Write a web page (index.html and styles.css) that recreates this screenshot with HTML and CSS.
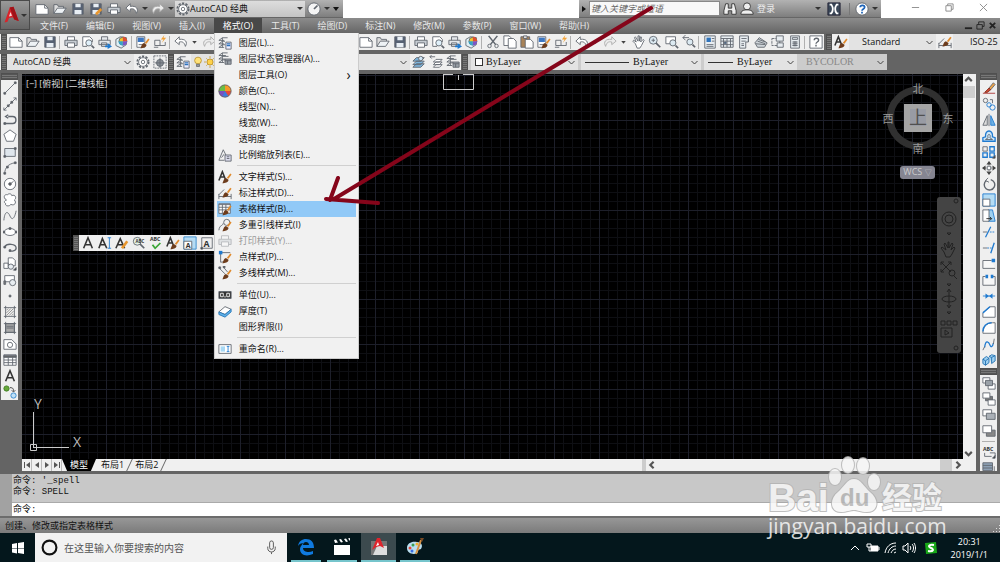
FILE: index.html
```html
<!DOCTYPE html>
<html lang="zh-CN">
<head>
  <meta charset="utf-8">
  <title>AutoCAD 经典</title>
  <link rel="stylesheet" href="styles.css">
  <script src="toolbars.js" defer></script>
</head>
<body>
  <!-- icon sprite -->
  <svg class="sprite">
    <symbol id="brush" viewBox="0 0 16 16"><path d="M10 9l4-5 1.500 1-3.500 5z" fill="#e08a2c" stroke="none"/><path d="M5 15c1-1 1-5 4-6l3 2c0 3-4 4-7 4z" fill="#6d3c1c" stroke="none"/></symbol>
    <symbol id="new" viewBox="0 0 16 16"><path d="M1 3h10l4 4v7H1z" fill="#fff"/><path d="M11 3v4h4"/></symbol>
    <symbol id="open" viewBox="0 0 16 16"><path d="M1 13V3h4l1 2h6v2" fill="#ddd"/><path d="M1 13l4-6h10l-4 6z" fill="#eef2f5"/></symbol>
    <symbol id="save" viewBox="0 0 16 16"><path d="M2 2h12v12H2z" fill="#566173"/><path d="M5 2h6v4H5zM4 9h8v5H4z" fill="#e8eef4" stroke="none"/></symbol>
    <symbol id="saveas" viewBox="0 0 16 16"><path d="M2 2h12v12H2z" fill="#566173"/><path d="M5 2h6v4H5zM4 9h8v5H4z" fill="#e8eef4" stroke="none"/><path d="M8 14l6-6" stroke="#e8962e" stroke-width="3"/></symbol>
    <symbol id="print" viewBox="0 0 16 16"><path d="M4 6V2h8v4" fill="#fff"/><path d="M1 6h14v6H1z" fill="#c6ccd2"/><path d="M4 9h8v5H4z" fill="#fff"/></symbol>
    <symbol id="preview" viewBox="0 0 16 16"><path d="M2 13V2h8l3 3v3M2 13h5" fill="#fff"/><circle cx="9" cy="9" r="3.500" fill="#dff0fa"/><path d="M12 12l3 3" stroke-width="2"/></symbol>
    <symbol id="publish" viewBox="0 0 16 16"><path d="M4 6V2h7v4M1 6h13v5H1zM4 9h6v4H4z" fill="#e4e7ea"/><path d="M8 13h4" stroke="#1f7ad0" stroke-width="2"/><path d="M11 9l5 4-5 3z" fill="#1f7ad0" stroke="none"/></symbol>
    <symbol id="cube" viewBox="0 0 16 16"><path d="M1 5l5-3 7 1v8l-6 4-6-3z" fill="#dff0f6"/><circle cx="9" cy="7" r="4.500" fill="#f0c52e"/><path d="M9 7V2a5 5 0 0 1 5 5z" fill="#e05030" stroke="none"/><path d="M9 7h5a5 5 0 0 1-5 5z" fill="#7a55c8" stroke="none"/><path d="M9 7v5a5 5 0 0 1-5-5z" fill="#38a3c8" stroke="none"/></symbol>
    <symbol id="match" viewBox="0 0 16 16"><path d="M1 2h9v12H1z" fill="#fff"/><path d="M2 3h7v5H2z" fill="#3d77c2" stroke="none"/><path d="M3 11h4"/><use href="#brush"/></symbol>
    <symbol id="block" viewBox="0 0 16 16"><path d="M2 6h6v6H2zM1 14h5M8 12h6v-4"/><path d="M13 0L9 5h3l-2 4 5-6h-3z" fill="#f2a33a" stroke="none"/></symbol>
    <symbol id="undo" viewBox="0 0 16 16"><path d="M6 2L1 7l5 4V8c4-1 6 1 7 5 3-5 0-9-7-8z" fill="#fff"/></symbol>
    <symbol id="redo" viewBox="0 0 16 16"><path d="M10 2l5 5-5 4V8c-4-1-6 1-7 5-3-5 0-9 7-8z" fill="#ececec" stroke="#aaa"/></symbol>
    <symbol id="drop" viewBox="0 0 16 16"><path d="M4 6h8l-4 5z" fill="#444" stroke="none"/></symbol>
    <symbol id="cut" viewBox="0 0 16 16"><path d="M3 1l8 10M13 1L5 11" stroke-width="1.800"/><circle cx="4" cy="12.500" r="2"/><circle cx="12" cy="12.500" r="2"/></symbol>
    <symbol id="copy" viewBox="0 0 16 16"><path d="M1 1h6l2 2v9H1z" fill="#fff"/><path d="M6 4h6l3 3v8H6z" fill="#fff"/></symbol>
    <symbol id="paste" viewBox="0 0 16 16"><path d="M1 2h10v12H1z" fill="#a98358"/><path d="M4 1h4v3H4z" fill="#ddd"/><path d="M6 5h6l3 3v7H6z" fill="#fff"/></symbol>
    <symbol id="hand" viewBox="0 0 16 16"><path d="M5 10L2 7l1-1 3 2L4 3l1-1 3 5V1h1.500v6L11 2l1 .5L11 8l3-3 1 1-3 6-2 3H7z" fill="#fff"/></symbol>
    <symbol id="zoom" viewBox="0 0 16 16"><circle cx="6" cy="6" r="4.500" fill="#dceaf2"/><path d="M9 9l5 5" stroke-width="2"/><path d="M4 6h4M6 4v4"/></symbol>
    <symbol id="zoomwin" viewBox="0 0 16 16"><path d="M1 2h11v8H1z" fill="#fff"/><circle cx="9" cy="9" r="3.500" fill="#dceaf2"/><path d="M12 12l3 3" stroke-width="2"/></symbol>
    <symbol id="zoomprev" viewBox="0 0 16 16"><path d="M8 3H1l3-3M1 3l3 3"/><circle cx="9" cy="8" r="3.500" fill="#dceaf2"/><path d="M12 11l3 3" stroke-width="2"/></symbol>
    <symbol id="props" viewBox="0 0 16 16"><path d="M2 1h12v14H2z" fill="#e8edf1"/><path d="M4 3h5v5H4z" fill="#2f73bb" stroke="none"/><path d="M10 4h3M10 7h3M4 11h8M4 13h8"/></symbol>
    <symbol id="center" viewBox="0 0 16 16"><path d="M1 1h14v13H1z" fill="#e8edf1"/><path d="M1 4h14M4 4v10M8 4v10M12 4v10M1 7h14M1 11h14"/><path d="M5 8h2v2H5z" fill="#2f73bb"/></symbol>
    <symbol id="palette" viewBox="0 0 16 16"><path d="M3 1h10v7h-3v7H3z" fill="#e8edf1"/><path d="M5 4h6M5 7h5M5 10h3M5 12h3M13 2v6"/></symbol>
    <symbol id="sheet" viewBox="0 0 16 16"><path d="M1 9l5-6 9 6-3 5H4z" fill="#cfd5da"/><path d="M2 10l11 1M4 7l9 3M5 5l8 3"/></symbol>
    <symbol id="markup" viewBox="0 0 16 16"><path d="M1 4h9v8H1z" stroke-dasharray="3 1"/><path d="M6 1h8v6H6zM7 9h7v5H7z" fill="#e8edf1"/></symbol>
    <symbol id="calc" viewBox="0 0 16 16"><path d="M3 1h10v14H3z" fill="#e8edf1"/><path d="M5 3h6v2H5zM5 8h6M5 10h6M5 12h6M7 7v6M9 7v6"/></symbol>
    <symbol id="help" viewBox="0 0 16 16"><path d="M1 1h14v14H1z" fill="#fff"/><path d="M6 6c0-3 5-3 5 0 0 2-3 2-3 4M8 11v2" stroke-width="1.600"/></symbol>
    <symbol id="textstyle" viewBox="0 0 16 16"><path d="M1 12L5 2l4 10M3 8h5" stroke="#333" stroke-width="1.800"/><use href="#brush"/></symbol>
    <symbol id="dimstyle" viewBox="0 0 16 16"><path d="M1 9v6M15 9v6M1 12h14M1 10l6-6"/><use href="#brush" y="-2"/></symbol>
    <symbol id="gear" viewBox="0 0 16 16"><circle cx="8" cy="8" r="6.500" stroke-dasharray="2.500 1.600" stroke-width="2"/><circle cx="8" cy="8" r="5" fill="#fff"/><circle cx="8" cy="8" r="2"/></symbol>
    <symbol id="gearsel" viewBox="0 0 16 16"><path d="M1 1h14v14H1z" stroke-dasharray="2 1"/><circle cx="8" cy="9" r="4" fill="#8a9097"/><path d="M8 3v12M2 9h12"/></symbol>
    <symbol id="layers" viewBox="0 0 16 16"><path d="M1 5l4-3h6M1 9l4-3h3M1 13l4-3h3M1 5h6M1 9h6M1 13h6M5 2v11"/><path d="M9 7h6v8H9z" fill="#eef"/><path d="M10 9h4M10 11h4" stroke="#2f73bb" stroke-width="1.600"/></symbol>
    <symbol id="layerstate" viewBox="0 0 16 16"><path d="M1 4l4-3h6M1 8l4-3h7M1 12l4-3h3M1 4h8M1 8h7M1 12h6M5 1v11"/><path d="M8 8h7v6H8z" fill="#9aa1a8"/><path d="M8 10h7M11 10v4"/></symbol>
    <symbol id="layermake" viewBox="0 0 16 16"><path d="M1 14l4-4h9l-4 4zM1 11l4-4h9l-4 4zM1 7l4-4h9l-4 4z" fill="#7db4dc"/><circle cx="10" cy="4" r="2.500" fill="#cfe6f6"/></symbol>
    <symbol id="layerprev" viewBox="0 0 16 16"><path d="M5 14l3-3h7l-3 3zM5 11l3-3h7l-3 3zM5 8l3-3h7l-3 3z" fill="#fff"/><path d="M7 2H1l2-2M1 2l2 2"/></symbol>
    <symbol id="bulb" viewBox="0 0 16 16"><circle cx="8" cy="6" r="4.500" fill="#ffe27a" stroke="#b48a20"/><path d="M6 11h4v3H6z" fill="#999"/></symbol>
    <symbol id="sun" viewBox="0 0 16 16"><circle cx="8" cy="8" r="4" fill="#ffd24a" stroke="#b48a20"/><path d="M8 0v3M8 13v3M0 8h3M13 8h3M3 3l2 2M11 11l2 2M13 3l-2 2M3 13l2-2" stroke="#c89a20"/></symbol>
    <!-- draw -->
    <symbol id="line" viewBox="0 0 16 16"><path d="M2 14L14 2"/><path d="M1 13h2v2H1zM13 1h2v2h-2z" fill="#555"/></symbol>
    <symbol id="xline" viewBox="0 0 16 16"><path d="M1 15L15 1M1 12v3h3M12 1h3v3"/><path d="M5 9h2v2H5zM9 5h2v2H9z" fill="#555"/></symbol>
    <symbol id="pline" viewBox="0 0 16 16"><path d="M6 4h5c5 0 5 8 0 8H2M6 2L3 4l3 2" stroke-width="1.600"/><path d="M1 11h2v2H1z" fill="#555"/></symbol>
    <symbol id="polygon" viewBox="0 0 16 16"><path d="M8 1l7 5-3 8H4L1 6z" fill="#fff"/></symbol>
    <symbol id="rect" viewBox="0 0 16 16"><path d="M2 4h12v9H2z" fill="#dfe6ec"/><path d="M1 12h2v2H1zM13 3h2v2h-2z" fill="#555"/></symbol>
    <symbol id="arc" viewBox="0 0 16 16"><path d="M2 14C2 8 6 3 14 2"/><path d="M1 13h2v2H1zM4 6h2v2H4zM13 1h2v2h-2z" fill="#555"/></symbol>
    <symbol id="circle" viewBox="0 0 16 16"><circle cx="8" cy="8" r="6.500" fill="#fff"/><path d="M8 8l4-3"/><circle cx="8" cy="8" r="1.500" fill="#555"/></symbol>
    <symbol id="cloud" viewBox="0 0 16 16"><path d="M4 8C0 6 1 1 5 2c2-2 5-1 5 1 4-2 6 3 3 5 3 3 0 7-4 5-2 3-7 2-6-1-2-1-2-3 1-4z" fill="#fff"/></symbol>
    <symbol id="spline" viewBox="0 0 16 16"><path d="M1 13C2 1 6 3 8 8s5 4 7-6"/></symbol>
    <symbol id="ellipse" viewBox="0 0 16 16"><ellipse cx="8" cy="8" rx="6.500" ry="4" fill="#fff"/><path d="M0 7h2v2H0zM14 7h2v2h-2zM7 3h2v2H7z" fill="#555"/></symbol>
    <symbol id="ellarc" viewBox="0 0 16 16"><path d="M2 7c2-5 13-4 13 1 0 4-6 4-7 3" stroke-width="1.500"/><path d="M1 6h2v2H1zM7 10h2v2H7z" fill="#555"/></symbol>
    <symbol id="insert" viewBox="0 0 16 16"><path d="M6 1h5l3 3v6H6zM1 7h5v6H1z" fill="#fff"/><circle cx="9" cy="11" r="3" fill="#e8edf1"/><path d="M12 15h3v-3z" fill="#222"/></symbol>
    <symbol id="mkblock" viewBox="0 0 16 16"><path d="M2 3h11v7H2z" fill="#fff"/><circle cx="11" cy="11" r="3.500" fill="#e8edf1"/><path d="M1 9h2v4H1z" fill="#777"/></symbol>
    <symbol id="point" viewBox="0 0 16 16"><path d="M7 7h2v2H7z" fill="#555"/></symbol>
    <symbol id="hatch" viewBox="0 0 16 16"><path d="M1 3h14M1 13h14M3 1v14M13 1v14"/><path d="M4 6l2-2M4 9l5-5M4 12l8-8M7 12l5-5M10 12l2-2" stroke="#888"/></symbol>
    <symbol id="gradient" viewBox="0 0 16 16"><path d="M3 3h10v10H3z" fill="#aaa"/><path d="M1 3h14M1 13h14M3 1v14M13 1v14M4 6h8M4 8h8"/></symbol>
    <symbol id="region" viewBox="0 0 16 16"><path d="M1 3h9l5 5v6H1z" fill="#fff"/><circle cx="8" cy="9" r="3"/></symbol>
    <symbol id="table" viewBox="0 0 16 16"><path d="M1 2h14v12H1z" fill="#fff"/><path d="M1 3h14v2H1z" fill="#666"/><path d="M1 8h14M1 11h14M6 5v9M11 5v9"/></symbol>
    <symbol id="mtext" viewBox="0 0 16 16"><path d="M3 14L8 2l5 12M5 10h6" stroke="#333" stroke-width="1.800"/></symbol>
    <symbol id="addsel" viewBox="0 0 16 16"><circle cx="4" cy="4" r="3" fill="#66a83a" stroke="#3e7a20"/><circle cx="12" cy="12" r="3" fill="#bfe0f8" stroke="#2f86cc"/><path d="M8 3c4 0 4 2 4 4M10 6l2 2 2-2" stroke="#333"/></symbol>
    <!-- modify -->
    <symbol id="erase" viewBox="0 0 16 16"><path d="M1 14h14" stroke="#a33"/><path d="M8 8l5-6 2 2-5 6z" fill="#eaa24a"/><path d="M3 13l5-5 2 2-4 3z" fill="#c84a34" stroke="#8a3020"/></symbol>
    <symbol id="dup" viewBox="0 0 16 16"><circle cx="4" cy="4" r="2.500"/><circle cx="8" cy="9" r="2.500" stroke="#1f7ad0"/><circle cx="12" cy="12" r="3" stroke="#1f7ad0"/><path d="M9 3h3v4"/></symbol>
    <symbol id="mirror" viewBox="0 0 16 16"><path d="M6 3v11H1z" fill="#ddd"/><path d="M10 3v11h5z" fill="#6fb2e4" stroke="#1f7ad0"/><path d="M8 1v14"/></symbol>
    <symbol id="offset" viewBox="0 0 16 16"><path d="M1 14v-4l3-1c-1-9 9-9 8 0l3 1v4z" fill="#cde6f8" stroke="#1f7ad0" stroke-width="1.500"/><path d="M4 12l3-2c-2-5 4-5 2 0l3 2z"/></symbol>
    <symbol id="array" viewBox="0 0 16 16"><path d="M1 2h5v5H1z"/><path d="M1 9h5v5H1zM9 2h5v5H9zM9 9h5v5H9z" stroke="#1f7ad0" stroke-width="1.500"/><path d="M12 15h3v-3z" fill="#222"/></symbol>
    <symbol id="move" viewBox="0 0 16 16"><path d="M8 1v14M1 8h14" stroke="#444" stroke-dasharray="4 2"/><path d="M8 0L5 4h6zM8 16l-3-4h6zM0 8l4-3v6zM16 8l-4-3v6z" fill="#444" stroke="none"/><path d="M6 6h4v4H6z" fill="#fff"/></symbol>
    <symbol id="rotate" viewBox="0 0 16 16"><path d="M5 4a6 6 0 1 0 5-1" stroke-width="1.600"/><path d="M7 1L4 4l4 2" /></symbol>
    <symbol id="scale" viewBox="0 0 16 16"><path d="M1 1h14v14H1z" fill="#b5dcf4" stroke="#1f7ad0"/><path d="M1 7h8v8H1z" fill="#fff"/></symbol>
    <symbol id="stretch" viewBox="0 0 16 16"><path d="M7 1h5l3 13H7z" fill="#9fd0f0" stroke="#1f7ad0"/><path d="M1 1h7v13H1z" fill="#fff"/><path d="M5 11h6M9 9l2 2-2 2" stroke="#222"/></symbol>
    <symbol id="trim" viewBox="0 0 16 16"><path d="M4 14L10 2" stroke="#1f7ad0" stroke-width="1.500"/><path d="M1 8h5"/><path d="M9 8h6" stroke="#1f7ad0" stroke-dasharray="2 1"/></symbol>
    <symbol id="extend" viewBox="0 0 16 16"><path d="M10 14L14 2" stroke="#1f7ad0" stroke-width="1.500"/><path d="M1 8h5"/><path d="M6 8h5" stroke="#1f7ad0" stroke-dasharray="2 1"/></symbol>
    <symbol id="breakpt" viewBox="0 0 16 16"><path d="M11 4H1v9h14" fill="#f7f7f7"/><path d="M11 2h4v4h-4z" fill="#1f7ad0" stroke="none"/></symbol>
    <symbol id="break" viewBox="0 0 16 16"><path d="M4 4H1v10h14V4h-3" fill="#f7f7f7"/><path d="M4 2h3v4H4zM10 2h3v4h-3z" fill="#1f7ad0" stroke="none"/></symbol>
    <symbol id="join" viewBox="0 0 16 16"><path d="M1 8h14" stroke="#1f7ad0"/><path d="M4 5l4 3-4 3zM12 5L8 8l4 3z" fill="#1f7ad0" stroke="none"/></symbol>
    <symbol id="chamfer" viewBox="0 0 16 16"><path d="M1 14V9l8-7h6v12z" fill="#fff"/><path d="M1 9l8-7" stroke="#1f7ad0" stroke-width="1.600"/></symbol>
    <symbol id="fillet" viewBox="0 0 16 16"><path d="M1 14C1 7 5 2 12 2h3v12z" fill="#fff"/><path d="M1 12C1 6 5 2 11 2" stroke="#1f7ad0" stroke-width="1.600"/></symbol>
    <symbol id="blend" viewBox="0 0 16 16"><path d="M3 12C4 2 8 6 9 9s3 3 4-2" stroke="#1f7ad0" stroke-width="1.500"/><path d="M1 15l2-4M13 8l1-6"/></symbol>
    <symbol id="explode" viewBox="0 0 16 16"><path d="M1 7l4-3 3 2v5l-4 3-3-2zM8 4l3-2 4 1v6l-4 3" fill="#9fd0f0" stroke="#1f6fb0"/><path d="M1 7l3 2v5M4 9l4-3M11 5v7M11 5l4-2M8 4l3 1" stroke="#1f6fb0"/></symbol>
    <symbol id="front" viewBox="0 0 16 16"><path d="M1 2h8v6H1zM7 9h8v6H7z" fill="#fff"/><path d="M4 5h8v6H4z" fill="#9aa1a8"/></symbol>
    <symbol id="back" viewBox="0 0 16 16"><path d="M4 5h8v5H4z" fill="#777"/><path d="M1 1h8v6H1zM7 9h8v6H7z" fill="#fff"/></symbol>
    <symbol id="above" viewBox="0 0 16 16"><path d="M1 2h10v7H1z" fill="#fff"/><path d="M5 6h10v7H5z" fill="#aab0b7"/></symbol>
    <symbol id="under" viewBox="0 0 16 16"><path d="M5 7h10v7H5z" fill="#888"/><path d="M1 2h10v8H1z" fill="#fff"/></symbol>
    <symbol id="abc" viewBox="0 0 16 16"><text x="1" y="7" font-size="6">ABC</text><path d="M3 9v4h8M9 9h6v4"/><path d="M12 15h3v-3z" fill="#222"/></symbol>
    <symbol id="hatchback" viewBox="0 0 16 16"><path d="M1 2h11v9H1z" fill="#8da0b4"/><path d="M1 5h11M1 8h11M14 6v8H6"/></symbol>
    <!-- text toolbar -->
    <symbol id="dtext" viewBox="0 0 16 16"><path d="M1 14L5 3l5 11M3 10h5" stroke="#333" stroke-width="1.800"/><path d="M11 2h4M13 2v12M11 14h4" stroke="#1f7ad0"/></symbol>
    <symbol id="edittext" viewBox="0 0 16 16"><path d="M1 14L6 3l5 11M3 10h6" stroke="#333" stroke-width="1.800"/><path d="M8 14l6-8" stroke="#e8962e" stroke-width="3"/></symbol>
    <symbol id="find" viewBox="0 0 16 16"><circle cx="6" cy="6" r="4.500" fill="#e6f2e8"/><path d="M9 9l5 5" stroke-width="2"/><text x="4" y="8" font-size="5">ABC</text></symbol>
    <symbol id="spell" viewBox="0 0 16 16"><text x="1" y="6" font-size="6">ABC</text><path d="M4 10l3 4 6-6" stroke="#3aa535" stroke-width="2"/></symbol>
    <symbol id="scaletext" viewBox="0 0 16 16"><path d="M1 1h14v14H1z" fill="#b5dcf4" stroke="#2f86cc"/><path d="M1 6h9v9H1z" fill="#fff"/><text x="3" y="14" font-size="8">A</text></symbol>
    <symbol id="justify" viewBox="0 0 16 16"><path d="M2 2h12v12H2z"/><text x="4" y="12" font-size="10">A</text><path d="M1 13h2v2H1z" fill="#333"/></symbol>
    <!-- menu -->
    <symbol id="color" viewBox="0 0 16 16"><g stroke="none"><circle cx="8" cy="8" r="7" fill="#e8483a"/><path d="M8 8V1a7 7 0 0 1 7 7z" fill="#f59a28"/><path d="M8 8L1 9a7 7 0 0 1 7-8z" fill="#6bbd45"/><path d="M8 8L1 8a7 7 0 0 0 5 7z" fill="#7a4fc0"/><path d="M8 8l-3 6a7 7 0 0 0 7 0z" fill="#3c7ae0"/></g><circle cx="8" cy="8" r="7" stroke="#666"/></symbol>
    <symbol id="scalelist" viewBox="0 0 16 16"><path d="M1 14L6 2l3 6M1 14h6M4 11l3-4"/><path d="M8 8h7v7H8z" fill="#dde"/><path d="M10 10h3M10 12h3"/></symbol>
    <symbol id="tablestyle" viewBox="0 0 16 16"><path d="M1 2h13v11H1z" fill="#fff"/><path d="M1 3h13M1 6h13M1 9h13M5 3v10M9 3v10"/><use href="#brush"/></symbol>
    <symbol id="leader" viewBox="0 0 16 16"><path d="M1 14C2 7 5 10 6 6"/><circle cx="10" cy="5" r="3.500"/><use href="#brush"/></symbol>
    <symbol id="pointstyle" viewBox="0 0 16 16"><path d="M3 3h11M3 3v11l6-1"/><path d="M1 1h4v4H1z" fill="#1f7ad0" stroke="none"/><use href="#brush"/></symbol>
    <symbol id="mlstyle" viewBox="0 0 16 16"><path d="M1 2l7 7M6 1l5 6"/><path d="M1 1h2v2H1zM6 0h2v2H6z" fill="#555"/><use href="#brush"/></symbol>
    <symbol id="units" viewBox="0 0 16 16"><path d="M1 4h14v8H1z" fill="#333"/><path d="M3 6h3v4H3zM10 6h3v4h-3zM8 9v2" stroke="#fff"/></symbol>
    <symbol id="thick" viewBox="0 0 16 16"><path d="M1 9l7-6 7 3-7 6z" fill="#fff"/><path d="M1 9v3l7 3 7-6V6l-7 6z" fill="#5fb0e8" stroke="#2878b8"/></symbol>
    <symbol id="rename" viewBox="0 0 16 16"><path d="M1 3h14v10H1z" fill="#fff"/><path d="M3 5h5v6H3z" fill="#a8d8f4" stroke="none"/><path d="M10 5h3M11.500 5v6M10 11h3" stroke="#1f7ad0"/></symbol>
  </svg>

  <header class="titlebar">
    <div class="quick">
      <span class="icons" data-icons="new open save saveas print undo"></span>
      <i class="arrow"></i>
      <span class="icons" data-icons="redo"></span>
      <i class="arrow"></i>
      <label class="combo workspace"><svg class="ic"><use href="#gear"/></svg><select aria-label="工作空间"><option>AutoCAD 经典</option></select></label>
      <svg class="ic gauge" viewBox="0 0 16 16"><circle cx="8" cy="8" r="7" fill="#f4f4f4"/><path d="M8 8l4-4" stroke-width="2"/></svg>
      <i class="arrow"></i>
      <i class="arrow dark"></i>
    </div>
    <div class="info">
      <i class="play"></i>
      <input type="text" aria-label="搜索" placeholder="键入关键字或短语">
      <svg class="ic" viewBox="0 0 16 16"><path d="M3 2h3v5h4V2h3l2 8v4h-5v-4H6v4H1v-4z" fill="#eee" stroke="#333"/></svg>
      <svg class="ic" viewBox="0 0 16 16"><circle cx="8" cy="5" r="4" fill="#eee" stroke="#333"/><path d="M1 14c0-4 3-5 7-5s7 1 7 5z" fill="#eee" stroke="#333"/></svg>
      <a href="#">登录</a>
      <i class="arrow login"></i>
      <svg class="ic" viewBox="0 0 16 16"><path d="M1 1h14v14H1z" fill="#3a4758" stroke="#223"/><path d="M3 3h2c2 3 2 7 0 10H3M13 3h-2c-2 3-2 7 0 10h2" stroke="#fff" stroke-width="2"/></svg>
      <i class="bar"></i>
      <svg class="ic" viewBox="0 0 16 16"><circle cx="8" cy="8" r="7" fill="#fff"/><path d="M6 6c0-3 5-3 5 0 0 2-3 2-3 4M8 11v2" stroke="#1d63b8" stroke-width="2"/></svg>
      <i class="arrow"></i>
    </div>
    <div class="winctl">
      <button aria-label="最小化"><svg viewBox="0 0 10 10"><path d="M1 5h8"/></svg></button>
      <button aria-label="还原"><svg viewBox="0 0 10 10"><path d="M1 3h6v6H1zM3 3V1h6v6H7"/></svg></button>
      <button aria-label="关闭"><svg viewBox="0 0 10 10"><path d="M1 1l8 8M9 1L1 9"/></svg></button>
    </div>
  </header>

  <nav class="menubar">
    <button>文件(F)</button><button>编辑(E)</button><button>视图(V)</button><button>插入(I)</button>
    <div class="open">
      <button class="on">格式(O)</button>
      <div class="menu">
        <button><svg class="ic"><use href="#layers"/></svg>图层(L)...</button>
        <button><svg class="ic"><use href="#layerstate"/></svg>图层状态管理器(A)...</button>
        <button class="sub"><svg class="ic"></svg>图层工具(O)</button>
        <button><svg class="ic"><use href="#color"/></svg>颜色(C)...</button>
        <button><svg class="ic"></svg>线型(N)...</button>
        <button><svg class="ic"></svg>线宽(W)...</button>
        <button><svg class="ic"></svg>透明度</button>
        <button><svg class="ic"><use href="#scalelist"/></svg>比例缩放列表(E)...</button>
        <hr>
        <button><svg class="ic"><use href="#textstyle"/></svg>文字样式(S)...</button>
        <button><svg class="ic"><use href="#dimstyle"/></svg>标注样式(D)...</button>
        <button class="hot"><svg class="ic"><use href="#tablestyle"/></svg>表格样式(B)...</button>
        <button><svg class="ic"><use href="#leader"/></svg>多重引线样式(I)</button>
        <button disabled><svg class="ic"><use href="#print"/></svg>打印样式(Y)...</button>
        <button><svg class="ic"><use href="#pointstyle"/></svg>点样式(P)...</button>
        <button><svg class="ic"><use href="#mlstyle"/></svg>多线样式(M)...</button>
        <hr>
        <button><svg class="ic"><use href="#units"/></svg>单位(U)...</button>
        <button><svg class="ic"><use href="#thick"/></svg>厚度(T)</button>
        <button><svg class="ic"></svg>图形界限(I)</button>
        <hr>
        <button><svg class="ic"><use href="#rename"/></svg>重命名(R)...</button>
      </div>
    </div>
    <button>工具(T)</button><button>绘图(D)</button><button>标注(N)</button><button>修改(M)</button><button>参数(P)</button><button>窗口(W)</button><button>帮助(H)</button>
    <div class="mdi">
      <svg viewBox="0 0 10 10"><path d="M1 8h8" stroke-width="2"/></svg>
      <svg viewBox="0 0 10 10"><path d="M1 4h6v5H1zM3 4V1h6v5H7"/></svg>
      <svg viewBox="0 0 10 10"><path d="M2 2l6 6M8 2L2 8" stroke-width="2"/></svg>
    </div>
    <button class="app" aria-label="应用程序菜单">
      <svg viewBox="0 0 24 24"><path d="M2 22L9 2l5-1 7 19-6-2-2-3-5 1-2 5z" fill="#d8232a"/><path d="M9 2l5-1 7 19-6-2z" fill="#a01218"/><path d="M10 8l2 5-4 1z" fill="#fbdcdc"/></svg>
      <i class="arrow"></i>
    </button>
  </nav>

  <div class="bars">
    <div class="row">
      <div class="strip first"><i class="grip"></i><span class="icons" data-icons="new open save | print preview publish cube | match block | undo drop redo drop"></span></div>
      <div class="strip"><span class="icons" data-icons="new open save | print preview publish cube | cut copy paste match block | undo drop redo drop hand zoom zoomwin zoomprev | props center palette sheet markup calc | help"></span></div>
      <div class="strip styles"><i class="grip"></i><span class="icons" data-icons="textstyle"></span>
        <label class="combo std"><select aria-label="文字样式"><option>Standard</option></select></label>
        <span class="icons" data-icons="dimstyle"></span>
        <label class="combo iso"><select aria-label="标注样式"><option>ISO-25</option></select></label>
      </div>
    </div>
    <div class="row">
      <div class="strip"><i class="grip"></i>
        <label class="combo ws"><select aria-label="工作空间"><option>AutoCAD 经典</option></select></label>
        <span class="icons" data-icons="gear gearsel"></span>
      </div>
      <div class="strip"><i class="grip"></i><span class="icons" data-icons="layers"></span>
        <label class="combo layer"><svg class="ic"><use href="#bulb"/></svg><svg class="ic"><use href="#sun"/></svg><select aria-label="图层"><option>0</option></select></label>
        <span class="icons" data-icons="layermake layerprev layerstate"></span>
      </div>
      <div class="strip props"><i class="grip"></i>
        <label class="combo c1"><i class="swatch"></i><select aria-label="颜色"><option>ByLayer</option></select></label>
        <label class="combo c2"><i class="rule"></i><select aria-label="线型"><option>ByLayer</option></select></label>
        <label class="combo c3"><i class="rule short"></i><select aria-label="线宽"><option>ByLayer</option></select></label>
        <label class="combo c4"><select aria-label="打印样式" disabled><option>BYCOLOR</option></select></label>
      </div>
    </div>
  </div>

  <main class="work">
    <aside class="dock"><div class="vstrip"><i class="grip"></i><span class="icons" data-icons="line xline pline polygon rect arc circle cloud spline ellipse ellarc insert mkblock point hatch gradient region table mtext addsel"></span></div></aside>
    <section class="view">
      <div class="canvas">
        <svg class="grid">
          <defs>
            <pattern id="cells" x="39" y="46" width="224" height="224" patternUnits="userSpaceOnUse">
              <path class="minor" d="M9.500 0v224M18.500 0v224M27.500 0v224M36.500 0v224M54.500 0v224M63.500 0v224M72.500 0v224M81.500 0v224M99.500 0v224M108.500 0v224M117.500 0v224M125.500 0v224M143.500 0v224M152.500 0v224M161.500 0v224M170.500 0v224M188.500 0v224M197.500 0v224M206.500 0v224M215.500 0v224M0 9.500h224M0 18.500h224M0 27.500h224M0 36.500h224M0 54.500h224M0 63.500h224M0 72.500h224M0 81.500h224M0 99.500h224M0 108.500h224M0 117.500h224M0 125.500h224M0 143.500h224M0 152.500h224M0 161.500h224M0 170.500h224M0 188.500h224M0 197.500h224M0 206.500h224M0 215.500h224"/>
              <path class="major" d="M.5 0v224M45.500 0v224M90.500 0v224M134.500 0v224M179.500 0v224M0 .5h224M0 45.500h224M0 90.500h224M0 134.500h224M0 179.500h224"/>
            </pattern>
          </defs>
          <rect width="100%" height="100%" fill="url(#cells)"/>
          <path class="drawn" d="M421.500 0v15.500h30V0M421 .5h10M441 .5h10M436.500 1v5"/>
        </svg>
        <p class="viewname">[−] [俯视] [二维线框]</p>
        <svg class="ucs" viewBox="0 0 64 64"><path d="M9.500 23v36M9 58.500h36M6.500 55.500h6v6h-6z"/><text x="10" y="20">Y</text><text x="49" y="58">X</text></svg>
        <div class="float"><i class="grip"></i><span class="icons" data-icons="mtext dtext edittext find spell textstyle scaletext justify"></span></div>
        <svg class="compass" viewBox="0 0 72 80">
          <circle cx="36" cy="39" r="28"/><rect x="22" y="25" width="28" height="28"/><rect class="inner" x="28" y="30" width="16" height="17"/>
          <text x="36" y="14">北</text><text x="36" y="74">南</text><text x="6" y="44">西</text><text x="66" y="44">东</text>
          <text class="top" x="36" y="45">上</text>
        </svg>
        <button class="wcs">WCS <span>▽</span></button>
        <svg class="navbar" viewBox="0 0 24 156">
          <rect width="24" height="156" rx="3"/>
          <circle cx="12" cy="22" r="7"/><circle cx="12" cy="22" r="4"/><circle cx="19" cy="4" r="2"/>
          <path d="M10 36h4l-2 2zM7 55l-3-4 1-1 4 3-2-6 1-1 3 5v-6h1v6l3-5 1 1-2 6 3-3 1 1-3 6-2 3H9zM4 65l10 10M14 65L4 75M4 68v-3h3M11 65h3v3M4 72v3h3"/>
          <circle cx="15" cy="76" r="3"/><path d="M17 79l3 3M10 87h4l-2 2zM12 93v17M10 95l2-3 2 3M10 108l2 3 2-3"/><ellipse cx="12" cy="102" rx="7" ry="3"/>
          <path d="M10 115h4l-2 2zM4 124h4v4H4zM10 124h4v4h-4zM16 124h4v4h-4zM4 131h11v9H4zM8 133v5l4-2z"/><circle cx="19" cy="151" r="2"/>
        </svg>
      </div>
      <div class="vscroll"><svg viewBox="0 0 10 10"><path d="M2 6l3-3 3 3"/></svg><i class="thumb"></i><svg class="end" viewBox="0 0 10 10"><path d="M2 4l3 3 3-3"/></svg></div>
      <div class="tabs">
        <button class="nav" aria-label="第一个"><svg viewBox="0 0 8 8"><path d="M1 1h1v6H1zM7 1v6L3 4z"/></svg></button>
        <button class="nav" aria-label="上一个"><svg viewBox="0 0 8 8"><path d="M6 1v6L2 4z"/></svg></button>
        <button class="nav" aria-label="下一个"><svg viewBox="0 0 8 8"><path d="M2 1v6l4-3z"/></svg></button>
        <button class="nav" aria-label="最后一个"><svg viewBox="0 0 8 8"><path d="M6 1h1v6H6zM1 1v6l4-3z"/></svg></button>
        <button class="tab on">模型</button><button class="tab">布局1</button><button class="tab">布局2</button>
        <div class="hscroll"><i class="split"></i><svg viewBox="0 0 10 10"><path d="M6 2L3 5l3 3"/></svg><i class="thumb"></i><svg viewBox="0 0 10 10"><path d="M4 2l3 3-3 3"/></svg></div>
      </div>
    </section>
    <aside class="dock right">
      <div class="vstrip"><i class="grip"></i><span class="icons" data-icons="erase dup mirror offset array move rotate scale stretch trim extend breakpt break join chamfer fillet blend explode"></span><i class="grip"></i><span class="icons" data-icons="front back above under | abc hatchback"></span></div>
    </aside>
  </main>

  <section class="command">
    <pre>命令: '_spell
命令: SPELL</pre>
    <label>命令: <input type="text"></label>
  </section>

  <footer class="status">创建、修改或指定表格样式<i class="size"></i></footer>

  <div class="taskbar">
    <button class="start" aria-label="开始"><svg viewBox="0 0 12 12"><path d="M0 2l5-1v5H0zM6 1l6-1v6H6zM0 6.500h5v5l-5-1zM6 6.500h6V12l-6-1z"/></svg></button>
    <label class="search">
      <svg viewBox="0 0 16 16"><circle cx="8" cy="8" r="6.500"/></svg>
      <input type="text" aria-label="搜索" placeholder="在这里输入你要搜索的内容">
      <svg class="mic" viewBox="0 0 16 16"><rect x="6" y="1" width="4" height="9" rx="2"/><path d="M4 7v2c0 5 8 5 8 0V7M8 13v2"/></svg>
    </label>
    <div class="apps">
      <button aria-label="Edge"><svg viewBox="0 0 18 18"><path d="M1 8C2 3 5 1 9 1c5 0 8 3 8 9H6c0 4 6 5 10 3v3C9 19 3 17 3 11c0-2 2-5 4-6C4 5 2 6 1 8zm5-1h6c0-4-6-4-6 0z" fill="#0f7ae0"/></svg></button>
      <button aria-label="视频"><svg viewBox="0 0 18 18"><path d="M1 7h16v10H1z" fill="#fff"/><path d="M1 2l2-.5 2 3-3 .5zM6 1.500L8 1l2 3-2 .5zM11 1l2-.5 2 3-2 .5zM15 .5L17 0v3z" fill="#fff"/></svg></button>
      <button class="on" aria-label="AutoCAD"><svg viewBox="0 0 18 18"><path d="M1 3h16v14H1z" fill="#777"/><path d="M7 8h10v9H3z" fill="#ddd"/><path d="M2 12L7 0l3 0 4 10-4-2-4 1z" fill="#e0242c"/><path d="M8 4l1 3-3 1z" fill="#fff"/></svg></button>
      <button aria-label="画图"><svg viewBox="0 0 18 18"><path d="M1 10c0-5 5-7 10-6 5 0 6 4 4 7-2 1-3 0-3 3-1 3-11 3-11-4z" fill="#b9def0"/><circle cx="4" cy="10" r="1.500" fill="#e0483a"/><circle cx="7" cy="7" r="1.500" fill="#3aa050"/><circle cx="11" cy="6" r="1.500" fill="#f0b030"/><circle cx="6" cy="13" r="1.500" fill="#3a6ae0"/><path d="M10 16l5-14" stroke="#d89040" stroke-width="2"/><path d="M14 0h4l-2 4z" fill="#7a4a24"/></svg></button>
    </div>
    <div class="tray">
      <svg viewBox="0 0 14 14"><path d="M3 9l4-4 4 4"/></svg>
      <svg viewBox="0 0 14 14"><path d="M5 5h7v5H5z" fill="#fff"/><path d="M13 6v3M1 3h4v3H1zM3 6v4h2"/></svg>
      <svg viewBox="0 0 14 14"><path d="M1 12C2 6 6 2 12 2M4 12c1-4 4-7 8-7M7 12c1-2 2-4 5-4M10 12l2-1"/></svg>
      <svg viewBox="0 0 14 14"><path d="M1 5h2l3-3v10L3 9H1zM8 5c1 1 1 3 0 4M10 3c2 2 2 6 0 8M12 2c2 3 2 7 0 10"/></svg>
      <svg class="sogou" viewBox="0 0 14 14"><path d="M1 2l11-1 1 11-11 1z" fill="#18a818" stroke="none"/><path d="M10 4C4 3 4 6 7 7s3 4-3 3" stroke="#fff" stroke-width="2"/></svg>
      <time>20:31<br>2019/1/1</time>
    </div>
  </div>

  <!-- annotations over the desktop -->
  <svg class="pen" viewBox="0 0 1000 562"><path d="M651 8L334 199M338 178l-8 22M326 199l52 4"/></svg>
  <svg class="mark" viewBox="0 0 180 90">
    <g class="outlined">
      <text class="logo" x="0" y="57">Bai</text>
      <ellipse cx="67" cy="23" rx="6" ry="8"/><ellipse cx="80" cy="11" rx="6" ry="8"/><ellipse cx="95" cy="12" rx="6" ry="8"/><ellipse cx="106" cy="28" rx="6" ry="8"/>
      <path d="M86 25c7 0 10 8 16 13 10 8 8 20-3 20-7 0-9-2-13-2s-7 2-13 2c-11 0-12-13-3-20 6-5 9-13 16-13z"/>
      <text class="cn" x="114" y="54">经验</text>
    </g>
    <text class="du" x="72" y="52">du</text>
    <text class="url" x="0" y="80">jingyan.baidu.com</text>
  </svg>
</body>
</html>
```
FILE: styles.css
```css
* { box-sizing: border-box; }
html, body {
  height: 100%;
  margin: 0;
}
body {
  display: flex;
  flex-direction: column;
  position: relative;
  overflow: hidden;
  background: #646464;
  font: 9px/12px "Open Sans", "Noto Sans CJK SC", sans-serif;
  color: #111;
}
button, input, select {
  margin: 0;
  padding: 0;
  border: 0;
  border-radius: 0;
  background: none;
  font: inherit;
  color: inherit;
  outline: 0;
}
select { appearance: none; min-width: 0; flex: 1; }
.sprite { display: none; }
.ic {
  flex: none;
  width: 14px;
  height: 14px;
  fill: none;
  stroke: #60666e;
}
svg text { font-weight: bold; }
symbol text { fill: #333; stroke: none; }
.icons { display: flex; align-items: center; }
.icons button {
  display: flex;
  justify-content: center;
  align-items: center;
  width: 17px;
  height: 16px;
}
.icons button.narrow { width: 11px; }
.icons button.narrow .ic { width: 9px; }
.icons hr {
  width: 1px;
  height: 13px;
  margin: 0 2px 0 1px;
  border: 0;
  background: #b0b0b0;
}
.arrow {
  width: 0;
  height: 0;
  border: 3px solid transparent;
  border-top-color: #333;
  border-bottom: 0;
}
.grip {
  flex: none;
  width: 6px;
  background: repeating-linear-gradient(#555 0 1px, #777 1px 2px);
  border: 1px solid #505050;
}

/* title bar */
.titlebar {
  display: flex;
  height: 18px;
  background: #fff;
}
.quick, .info {
  display: flex;
  align-items: center;
  background: linear-gradient(#b2b2b2, #7e7e7e);
  border-bottom: 1px solid #666;
}
.quick { width: 343px; padding-left: 33px; gap: 1px; }
.quick .icons button { width: 18px; }
.combo {
  display: flex;
  align-items: center;
  height: 16px;
  padding: 0 4px;
  background: #e3e3e3 url("data:image/svg+xml,%3Csvg xmlns='http://www.w3.org/2000/svg' width='7' height='5'%3E%3Cpath d='M.5 1l3 3 3-3' fill='none' stroke='%23444'/%3E%3C/svg%3E") no-repeat right 3px center;
}
.workspace {
  width: 130px;
  padding: 0 1px;
  background: linear-gradient(#ddd, #c4c4c4);
}
.workspace::after {
  content: "";
  margin-right: 1px;
  border: 3px solid transparent;
  border-top-color: #333;
  border-bottom: 0;
}
.gauge { margin: 0 2px 0 1px; }
.quick .dark { margin-left: 2px; border-top: 4px solid #111; }
.info {
  width: 302px;
  margin-left: auto;
  gap: 3px;
}
.play {
  margin-left: 3px;
  border: 3px solid transparent;
  border-left: 4px solid #111;
  border-right: 0;
}
.info input {
  width: 131px;
  height: 15px;
  padding-left: 1px;
  background: #f8f8f8;
  border: 1px solid #888;
  font-style: italic;
}
.info input::placeholder { color: #666; }
.info a { color: #eee; text-decoration: none; }
.info .login { margin-left: auto; }
.info a + .arrow + .ic { margin: 0 3px; }
.info .bar { width: 1px; height: 12px; margin: 0 2px; background: #777; }
.info .arrow:last-child { margin-right: 3px; }
.winctl {
  display: flex;
  justify-content: space-around;
  width: 119px;
  padding-left: 18px;
}
.winctl button { width: 24px; }
.winctl svg { width: 9px; height: 9px; fill: none; stroke: #888; }

/* menu bar */
.menubar {
  display: flex;
  position: relative;
  z-index: 2;
  height: 15px;
  padding-left: 31px;
  background: linear-gradient(#8c8c8c, #666);
  color: #e8e8e8;
}
.menubar > button, .open > button {
  height: 15px;
  padding: 0 9px;
  line-height: 14px;
}
.open { position: relative; }
.open > .on { background: #484848; color: #fff; }
.mdi {
  display: flex;
  gap: 3px;
  margin: 3px 3px 0 auto;
}
.mdi svg { width: 9px; height: 9px; fill: none; stroke: #222; }
.menubar > .app {
  display: flex;
  align-items: center;
  position: absolute;
  left: 0;
  bottom: 3px;
  width: 30px;
  height: 30px;
  padding: 0 2px;
  background: linear-gradient(#999, #666);
  border: 1px solid #4a4a4a;
}
.app svg { width: 20px; height: 24px; }
.menu {
  position: absolute;
  top: 15px;
  left: 0;
  width: 145px;
  padding: 2px 2px 1px;
  background: #f1f1f1;
  border: 1px solid #ccc;
  border-top: 0;
  color: #111;
}
.menu button {
  display: flex;
  align-items: center;
  gap: 6px;
  width: 100%;
  height: 16px;
  padding: 0 5px 0 0;
  text-align: left;
}
.menu .ic { margin: 0 1px; }
.menu hr {
  height: 1px;
  margin: 2px 0 3px 20px;
  border: 0;
  background: #d0d0d0;
}
.menu .hot { background: #91c9f7; }
.menu button:disabled { color: #999; }
.menu button:disabled .ic { opacity: 0.4; }
.sub::after { content: "›"; margin-left: auto; font-size: 14px; line-height: 12px; }

/* tool bars */
.bars {
  display: flex;
  flex-direction: column;
  gap: 4px;
  padding: 1px 0 3px;
}
.row { display: flex; height: 16px; overflow: hidden; }
.strip { display: flex; flex: none; background: #efefef; }
.first { width: 357px; }
.styles { margin-left: 2px; }
.std, .iso {
  width: 87px;
  padding-left: 13px;
}
.iso { padding-left: 17px; }
.row > .strip:first-child { padding-left: 1px; }
.ws { width: 127px; padding-left: 6px; }
.layer { width: 219px; padding-left: 1px; }
.layer .ic { width: 12px; height: 12px; }
.props { gap: 3px; margin-left: 1px; background: #ccc; }
.props .combo { font-family: "Liberation Serif", serif; font-size: 10px; }
.c1 { width: 107px; }
.c2 { width: 120px; }
.c3 { width: 93px; }
.c4 { width: 87px; padding-left: 6px; background-color: #ccc; color: #888; }
.c4 select:disabled { opacity: 1; }
.swatch { width: 8px; height: 8px; margin-right: 3px; border: 1px solid #333; background: #fff; }
.rule { width: 44px; height: 1px; margin-right: 4px; background: #333; }
.rule.short { width: 25px; }

/* work area */
.work {
  display: grid;
  grid-template-columns: 22px 1fr 24px;
  flex: 1;
  min-height: 0;
}
.dock { min-height: 0; overflow: hidden; padding-left: 1px; }
.dock.right { padding: 0 2px 3px 4px; }
.vstrip { width: 17px; background: #efefef; overflow: hidden; }
.right .vstrip { height: 100%; }
.vstrip .grip { display: block; width: 17px; height: 7px; }
.vstrip .icons { flex-direction: column; }
.vstrip .icons hr { width: 13px; height: 1px; margin: 2px; }
.view {
  display: grid;
  grid-template: 1fr 12px / 1fr 13px;
  min-height: 0;
  padding: 1px 0 3px;
}
.canvas {
  position: relative;
  overflow: hidden;
  background: #000;
  color: #ddd;
}
.grid { position: absolute; width: 100%; height: 100%; }
.minor { stroke: #0e0f13; }
.major { stroke: #1d1f2a; }
.drawn { fill: none; stroke: #ccc; }
.viewname { position: relative; margin: 4px; }
.ucs {
  position: absolute;
  left: 2px;
  bottom: 6px;
  width: 64px;
  height: 64px;
  fill: none;
  stroke: #ccc;
}
.ucs text { fill: #bbb; stroke: none; font: 14px "Open Sans", sans-serif; }
.float {
  display: flex;
  position: absolute;
  top: 161px;
  left: 51px;
  height: 16px;
  background: #efefef;
}
.compass {
  position: absolute;
  top: 5px;
  right: 9px;
  width: 72px;
  height: 80px;
}
.compass circle { fill: none; stroke: #303030; stroke-width: 7; }
.compass rect { fill: #a4a4a4; }
.compass .inner { fill: #989ba4; }
.compass text { fill: #999; font-size: 11px; font-weight: normal; text-anchor: middle; }
.compass .top { fill: #505050; font-size: 18px; }
.wcs {
  position: absolute;
  top: 92px;
  right: 28px;
  width: 35px;
  height: 13px;
  border-radius: 3px;
  background: #858591;
  color: #ccc;
  font-size: 9px;
  line-height: 12px;
}
.wcs span { font-size: 7px; }
.navbar {
  position: absolute;
  top: 123px;
  right: 2px;
  width: 24px;
  height: 156px;
  fill: none;
  stroke: #222;
}
.navbar rect { fill: #444; stroke: none; }
.vscroll, .hscroll { background: #f0f0f0; }
.vscroll svg, .hscroll svg { width: 11px; height: 12px; fill: none; stroke: #555; stroke-width: 2; }
.vscroll { display: flex; flex-direction: column; }
.vscroll .end { margin-top: auto; }
.thumb { flex: none; width: 12px; height: 12px; background: #cdcdcd; }
.tabs {
  display: flex;
  grid-column: 1 / 3;
  background: #f0f0f0;
  font-size: 9px;
}
.tabs .nav {
  display: flex;
  align-items: center;
  justify-content: center;
  width: 10px;
  border-right: 1px solid #bbb;
}
.nav svg { width: 8px; height: 8px; fill: #555; }
.tab {
  display: flex;
  align-items: center;
  padding-left: 5px;
  line-height: 12px;
}
.tab::after {
  content: "";
  width: 1px;
  height: 12px;
  margin-left: 5px;
  background: #666;
  transform: skewX(-25deg);
}
.tab.on {
  padding: 0 8px;
  background: #000;
  color: #fff;
  clip-path: polygon(0 0, 100% 0, 85% 100%, 15% 100%);
}
.tab.on::after { display: none; }
.hscroll {
  display: flex;
  flex: 1;
  max-width: 334px;
  margin-left: auto;
  padding-right: 13px;
}
.hscroll .split { width: 4px; margin-right: 1px; background: #ccc; }
.hscroll .thumb { margin-left: auto; }

/* command line */
.command {
  padding-left: 12px;
  border-bottom: 2px solid #6c6c6c;
  background: #a2a2a2;
  font-family: "Liberation Mono", "Noto Sans CJK SC", monospace;
}
.command pre {
  height: 29px;
  margin: 0;
  padding-top: 2px;
  background: #c8c8c8;
  font: inherit;
  line-height: 11px;
  border-bottom: 1px solid #aaa;
}
.command label { display: flex; height: 13px; background: #fff; line-height: 15px; }
.command pre, .command label { padding-left: 1px; }
.command input { flex: 1; }

.status {
  display: flex;
  height: 15px;
  padding-left: 5px;
  background: linear-gradient(#979797, #7b7b7b);
  line-height: 15px;
}
.size {
  width: 8px;
  height: 8px;
  margin: 6px 0 0 auto;
  background: radial-gradient(#ddd 1px, transparent 1px) 0 0 / 3px 3px;
  clip-path: polygon(100% 0, 100% 100%, 0 100%);
}

/* windows task bar */
.taskbar {
  display: flex;
  height: 29px;
  background: #04171c;
  color: #fff;
}
.start { width: 35px; }
.start svg { display: block; width: 12px; height: 12px; margin: 0 auto; fill: #fff; }
.search {
  display: flex;
  align-items: center;
  gap: 6px;
  width: 252px;
  padding: 0 8px 0 6px;
  background: #f2f2f2;
  color: #222;
  font-size: 10px;
}
.search svg { width: 17px; height: 17px; fill: none; stroke: #111; stroke-width: 2; }
.search .mic { width: 15px; height: 15px; stroke: #555; stroke-width: 1; }
.search input { flex: 1; }
.search input::placeholder { color: #555; }
.apps { display: flex; gap: 6px; margin-left: 4px; }
.apps button { width: 30px; border-bottom: 2px solid #76c5cc; }
.apps .on { width: 35px; margin: 0 -2px; background: #3c4a4e; }
.apps svg { display: block; width: 18px; height: 18px; margin: 0 auto; }
.tray {
  display: flex;
  align-items: center;
  gap: 4px;
  margin-left: auto;
  padding-right: 12px;
}
.tray svg { width: 14px; height: 14px; fill: none; stroke: #fff; }
.tray .sogou { margin-left: 4px; }
.tray time { margin-left: 9px; text-align: center; line-height: 13px; }

/* red arrow and watermark */
.pen, .mark { position: absolute; z-index: 3; pointer-events: none; }
.pen {
  top: 0;
  left: 0;
  width: 1000px;
  height: 562px;
  fill: none;
  stroke: #85051a;
  stroke-width: 4;
  stroke-linecap: round;
}
.mark {
  right: 52px;
  bottom: 18px;
  width: 180px;
  height: 90px;
  fill: #f6f6f6;
  opacity: 0.85;
  overflow: visible;
}
.outlined { stroke: #b4b4b4; stroke-width: 2; paint-order: stroke; }
.mark .logo { font: bold 39px "Liberation Sans", sans-serif; }
.mark .du { font: bold 24px "Liberation Sans", sans-serif; fill: #b5b5b5; }
.mark .cn { font: bold 30px "Noto Sans CJK SC", sans-serif; }
.mark .url { font: 21px "Open Sans", sans-serif; }
```
FILE: toolbars.js
```js
// fill every [data-icons] holder with buttons; "|" makes a separator
document.querySelectorAll('[data-icons]').forEach(function(holder) {
  holder.innerHTML = holder.dataset.icons.split(' ').map(function(id) {
    if (id == '|')
      return '<hr>';
    var cls = id == 'drop' ? ' class="narrow"' : '';
    return '<button' + cls + ' aria-label="' + id + '"><svg class="ic"><use href="#' + id + '"/></svg></button>';
  }).join('');
});
```
